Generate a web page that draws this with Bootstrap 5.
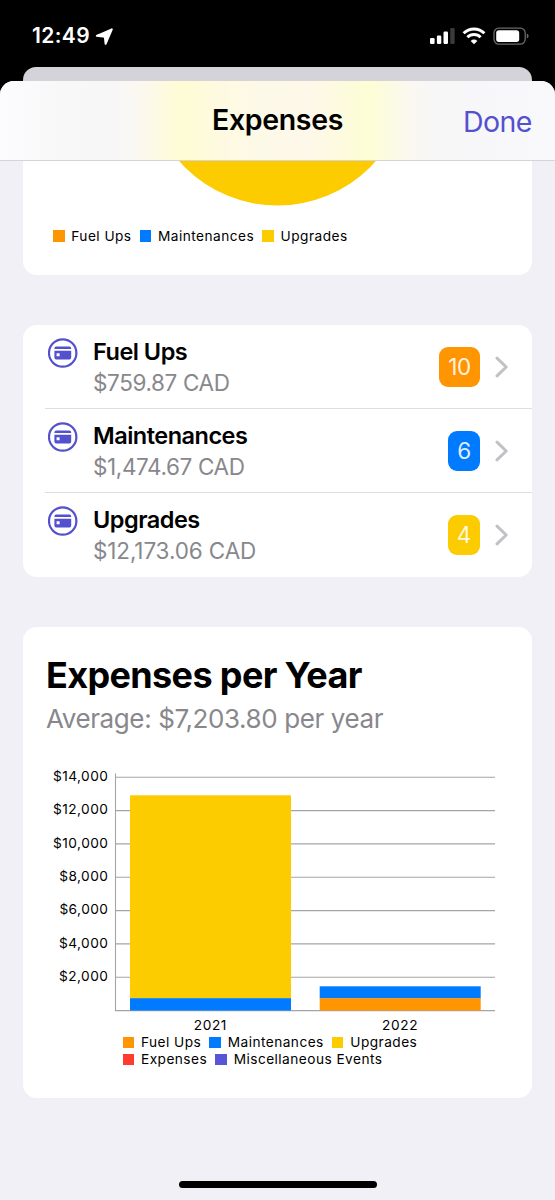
<!DOCTYPE html>
<html lang="en">
<head>
<meta charset="utf-8">
<meta name="viewport" content="width=device-width, initial-scale=1">
<title>Expenses</title>
<link href="https://cdn.jsdelivr.net/npm/bootstrap@5.3.0/dist/css/bootstrap.min.css" rel="stylesheet">
<style>
  :root { --ink-indigo:#5351ce; --c-orange:#ff9500; --c-blue:#007aff; --c-yellow:#fccb00; --c-red:#ff3b30; --c-indigo:#5856d6; }
  body { font-family: Inter, "Liberation Sans", sans-serif; background:#000; color:#000; line-height:1; }
  .phone { width:555px; height:1200px; overflow:hidden; background:#000; }
  .statusbar { height:67px; padding:4px 26px 0 32px; color:#fff; }
  .clock { font-size:21px; font-weight:600; letter-spacing:.4px; }
  .arrow { margin-left:3px; }
  .sheet-behind { height:14px; margin:0 23px; background:#d4d3d9; border-radius:13px 13px 0 0; }
  .sheet { height:1119px; background:#f1f0f6; border-radius:14px 14px 0 0; }
  .sheet-head { height:80px; padding:0 23px; border-bottom:1px solid #d5d5d3;
    background:linear-gradient(90deg,#fcfcfe 0,#f8f8f9 60px,#f7f7f8 110px,#faf8f2 135px,#fdf9e8 152px,#fefcd6 178px,#fefcd6 190px,#fefae0 215px,#fdf9e8 260px,#fdf8e9 310px,#fdfbdd 345px,#fdfdd5 368px,#fcfbe0 386px,#faf8ef 408px,#f7f7f7 435px,#f7f7f9 470px,#f9f9fb 555px); }
  .sheet-title { font-size:28.5px; font-weight:600; letter-spacing:-.35px; }
  .done-link { display:inline-block; margin-top:3px; font-size:28.5px; letter-spacing:-.5px; color:var(--ink-indigo); text-decoration:none; }
  .panel { margin:0 23px; background:#fff; border-radius:14px; overflow:hidden; }
  .panel-pie { height:114px; border-radius:0 0 14px 14px; margin-bottom:50px; }
  .legend { font-size:13.7px; letter-spacing:.45px; }
  .legend span { display:inline-flex; align-items:center; }
  .legend span::before { content:""; width:11.5px; height:11.5px; margin-right:6.8px; background:var(--k); }
  .pie-legend { padding:7.5px 0 0 30px; gap:8.2px; }
  .pie-legend span { line-height:15px; }
  .panel-list { margin-bottom:50px; }
  .entry { height:84px; margin-left:22px; padding:0 23px 0 3.3px; }
  .entry + .entry { box-shadow:0 -1px #dfdfe1; }
  .entry-icon { margin-top:13px; }
  .entry-text { padding-left:14.7px; }
  .entry-name { font-size:23.5px; font-weight:600; letter-spacing:-.5px; line-height:31px; }
  .entry-sum { font-size:22.5px; letter-spacing:-.38px; line-height:31px; color:#88888c; }
  .entry:last-child .entry-sum { letter-spacing:-.12px; }
  .count { height:39.5px; padding:0 9px; border-radius:9px; font-size:22.5px; color:rgba(255,255,255,.9); letter-spacing:-.3px; background:var(--k); }
  .chev { margin-left:15px; }
  .panel-year { height:471px; padding:29px 23px 0; }
  .year-title { font-size:36px; font-weight:700; letter-spacing:-.64px; line-height:38px; }
  .year-avg { margin-top:9px; font-size:26px; letter-spacing:-.4px; line-height:32px; color:#88888c; }
  .chart-row { margin-top:37px; }
  .axis { width:62.4px; margin-top:-12px; font-size:13.7px; letter-spacing:.45px; text-align:right; }
  .axis div { height:33.33px; line-height:33.33px; }
  .plot { width:382px; flex:none; margin-left:4.6px; }
  .years { margin-top:7px; padding-left:2.5px; font-size:13.7px; letter-spacing:.6px; }
  .legend-year { gap:0 8.2px; margin:3px 0 0 9.7px; }
  .legend-year i { height:3.3px; }
  .home-bar { width:198px; height:7px; flex:none; margin-bottom:12px; border-radius:4px; background:#000; }
</style>
</head>
<body>
<svg width="0" height="0" class="position-absolute">
  <defs>
    <g id="cardIcon">
      <circle cx="14.7" cy="15" r="13.7" fill="none" stroke="#5351ce" stroke-width="2.2"/>
      <path d="M6.400 11V10.400Q6.400 8.600 8.200 8.600H21.400Q23.200 8.600 23.200 10.400V11Z" fill="#5351ce"/>
      <path fill-rule="evenodd" d="M6.400 12.800H23.200V19.500Q23.200 21.400 21.400 21.400H8.200Q6.400 21.400 6.400 19.500ZM8.600 15.300V18.200H11.600V15.300Z" fill="#5351ce"/>
    </g>
    <path id="chevIcon" d="M2 2.200 11.200 11 2 19.800" fill="none" stroke="#c2c2c6" stroke-width="3" stroke-linecap="round" stroke-linejoin="round"/>
  </defs>
</svg>
<div class="phone">
  <div class="statusbar d-flex align-items-center justify-content-between">
    <div class="d-flex align-items-center">
      <span class="clock">12:49</span>
      <svg class="arrow" width="22" height="20" viewBox="0 0 22 20"><path d="M3.800 9.800 18.800 3.300 12.600 17.800 11.800 10.700Z" fill="#fff" stroke="#fff" stroke-width="2" stroke-linejoin="round"/></svg>
    </div>
    <svg width="99" height="20" viewBox="0 0 99 20">
      <g fill="#fff"><rect x="0" y="12" width="4.600" height="6" rx="1.200"/><rect x="6.900" y="9.500" width="4.400" height="8.500" rx="1.200"/><rect x="13.500" y="5.500" width="4.500" height="12.500" rx="1.200"/></g>
      <rect x="20.200" y="2" width="4.500" height="16" rx="1.200" fill="#3a3a3c"/>
      <g fill="none" stroke="#fff" stroke-width="3"><path d="M33.600 7.200a14.700 14.700 0 0 1 20.800 0"/><path d="M37.400 11.200a9.400 9.400 0 0 1 13.200 0"/></g>
      <path d="M44 18.200 40.700 14.900a4.700 4.700 0 0 1 6.600 0z" fill="#fff"/>
      <rect x="64" y="2.100" width="31.200" height="16" rx="4.800" fill="none" stroke="#69696b" stroke-width="1.300"/>
      <rect x="66.200" y="4.200" width="23" height="11.800" rx="2.700" fill="#fff"/>
      <path d="M96.800 7.600c2.300.9 2.300 4.100 0 5z" fill="#69696b"/>
    </svg>
  </div>
  <div class="sheet-behind"></div>
  <main class="sheet overflow-hidden d-flex flex-column">
    <header class="sheet-head row g-0 align-items-center flex-shrink-0">
      <div class="col-3"></div>
      <div class="col-6 text-center sheet-title">Expenses</div>
      <div class="col-3 text-end"><a class="done-link" href="#">Done</a></div>
    </header>

    <section class="panel panel-pie flex-shrink-0">
      <svg class="d-block" width="509" height="60" viewBox="0 0 509 60"><circle cx="254.500" cy="-86.500" r="131" fill="#fccb00"/></svg>
      <div class="legend pie-legend d-flex">
        <span style="--k:var(--c-orange)">Fuel Ups</span><span style="--k:var(--c-blue)">Maintenances</span><span style="--k:var(--c-yellow)">Upgrades</span>
      </div>
    </section>

    <section class="panel panel-list flex-shrink-0">
      <div class="entry d-flex align-items-center">
        <svg class="entry-icon align-self-start" width="30" height="30" viewBox="0 0 30 30"><use href="#cardIcon"/></svg>
        <div class="entry-text flex-grow-1"><div class="entry-name">Fuel Ups</div><div class="entry-sum">$759.87 CAD</div></div>
        <div class="count d-flex align-items-center" style="--k:var(--c-orange)">10</div>
        <svg class="chev" width="14" height="22" viewBox="0 0 14 22"><use href="#chevIcon"/></svg>
      </div>
      <div class="entry d-flex align-items-center">
        <svg class="entry-icon align-self-start" width="30" height="30" viewBox="0 0 30 30"><use href="#cardIcon"/></svg>
        <div class="entry-text flex-grow-1"><div class="entry-name">Maintenances</div><div class="entry-sum">$1,474.67 CAD</div></div>
        <div class="count d-flex align-items-center" style="--k:var(--c-blue)">6</div>
        <svg class="chev" width="14" height="22" viewBox="0 0 14 22"><use href="#chevIcon"/></svg>
      </div>
      <div class="entry d-flex align-items-center">
        <svg class="entry-icon align-self-start" width="30" height="30" viewBox="0 0 30 30"><use href="#cardIcon"/></svg>
        <div class="entry-text flex-grow-1"><div class="entry-name">Upgrades</div><div class="entry-sum">$12,173.06 CAD</div></div>
        <div class="count d-flex align-items-center" style="--k:var(--c-yellow)">4</div>
        <svg class="chev" width="14" height="22" viewBox="0 0 14 22"><use href="#chevIcon"/></svg>
      </div>
    </section>

    <section class="panel panel-year flex-shrink-0">
      <div class="year-title">Expenses per Year</div>
      <div class="year-avg">Average: $7,203.80 per year</div>
      <div class="chart-row d-flex">
        <div class="axis">
          <div>$14,000</div><div>$12,000</div><div>$10,000</div><div>$8,000</div><div>$6,000</div><div>$4,000</div><div>$2,000</div>
        </div>
        <div class="plot">
          <svg class="d-block" width="382" height="240" viewBox="0 0 382 240">
            <path d="M2 5.300H382M2 38.600H382M2 71.900H382M2 105.300H382M2 138.600H382M2 171.900H382M2 205.300H382M2 238.600H382M2.500 1.500V239" stroke="#a5a4a8" stroke-width="1.100" fill="none"/>
            <rect x="17" y="23.300" width="161" height="203.200" fill="#fccb00"/>
            <rect x="17" y="226.200" width="161" height="12.300" fill="#007aff"/>
            <rect x="206.700" y="214.300" width="161" height="12.100" fill="#007aff"/>
            <rect x="206.700" y="226.200" width="161" height="12.300" fill="#ff9500"/>
          </svg>
          <div class="years d-flex text-center"><div class="col-6">2021</div><div class="col-6">2022</div></div>
          <div class="legend legend-year d-flex flex-wrap">
            <span style="--k:var(--c-orange)">Fuel Ups</span><span style="--k:var(--c-blue)">Maintenances</span><span style="--k:var(--c-yellow)">Upgrades</span>
            <i class="w-100"></i>
            <span style="--k:var(--c-red)">Expenses</span><span style="--k:var(--c-indigo)">Miscellaneous Events</span>
          </div>
        </div>
      </div>
    </section>
    <div class="home-bar mx-auto mt-auto"></div>
  </main>
</div>
<script src="https://cdn.jsdelivr.net/npm/bootstrap@5.3.0/dist/js/bootstrap.bundle.min.js"></script>
</body>
</html>
